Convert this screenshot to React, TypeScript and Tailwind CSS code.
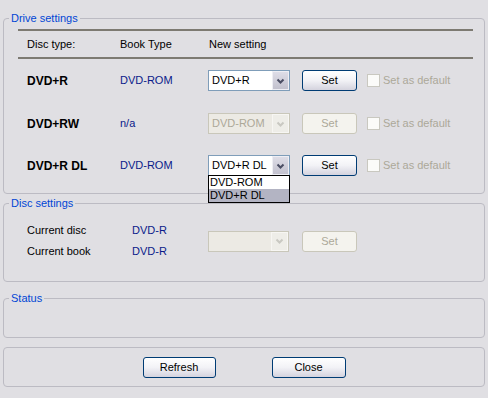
import React from 'react';

const Chevron: React.FC<{ disabled?: boolean }> = ({ disabled }) => (
  <svg width="9" height="6" viewBox="0 0 9 6">
    <path d="M1.5 1.5 L4.5 4.5 L7.5 1.5" stroke={disabled ? '#c9c8c2' : '#4a4d63'} strokeWidth="2" fill="none" />
  </svg>
);

const Combo: React.FC<{ value: string; disabled?: boolean; width?: string }> = ({ value, disabled, width = 'w-[82px]' }) => (
  <div
    className={`${width} h-[21px] flex items-stretch border ${
      disabled ? 'border-[#c9c7ba] bg-[#eceae4]' : 'border-[#7f9db9] bg-white'
    }`}
  >
    <span className={`flex-1 pl-[3px] leading-[19px] ${disabled ? 'text-[#aca899]' : 'text-black'}`}>{value}</span>
    <span
      className={`w-[17px] flex items-center justify-center border ${
        disabled
          ? 'border-[#f7f6f3] bg-[#eeede8]'
          : 'border-[#eeeef4] bg-gradient-to-b from-[#dedde7] to-[#c2c1ce]'
      }`}
    >
      <Chevron disabled={disabled} />
    </span>
  </div>
);

const XpButton: React.FC<{ label: string; disabled?: boolean; width?: string }> = ({ label, disabled, width = 'w-[55px]' }) => (
  <button
    className={`${width} h-[21px] rounded-[3px] border text-[11px] leading-[19px] ${
      disabled
        ? 'border-[#c9c7ba] bg-[#f4f3ee] text-[#aca899]'
        : 'border-[#003c74] bg-gradient-to-b from-white via-[#f2f2f6] to-[#d4d3de] text-black'
    }`}
  >
    {label}
  </button>
);

const GroupBox: React.FC<{ title?: string; className?: string; children?: React.ReactNode }> = ({ title, className = '', children }) => (
  <div className={`relative border border-[#bcbbc3] rounded-[4px] ${className}`}>
    {title && (
      <span className="absolute -top-[8px] left-[5px] px-[2px] bg-[#e0dfe3] text-[#0046d5] leading-[14px]">{title}</span>
    )}
    {children}
  </div>
);

const App: React.FC = () => {
  const drives = [
    { name: 'DVD+R', book: 'DVD-ROM', setting: 'DVD+R', enabled: true, mt: 'mt-[11px]' },
    { name: 'DVD+RW', book: 'n/a', setting: 'DVD-ROM', enabled: false, mt: 'mt-[22px]' },
    { name: 'DVD+R DL', book: 'DVD-ROM', setting: 'DVD+R DL', enabled: true, mt: 'mt-[21px]', open: true },
  ];

  return (
    <div
      className="w-[488px] h-[398px] bg-[#e0dfe3] pt-[18px] px-[3px] text-[11px] text-black"
      style={{ fontFamily: '"Liberation Sans", Arial, sans-serif' }}
    >
      <GroupBox title="Drive settings" className="h-[176px]">
        <div className="ml-[14px] mr-[11px] mt-[10px] h-[30px] border-t-2 border-b-2 border-[#7d7a72] flex items-center pl-[9px]">
          <span className="w-[93px]">Disc type:</span>
          <span className="w-[89px]">Book Type</span>
          <span>New setting</span>
        </div>

        {drives.map((d) => (
          <div key={d.name} className={`${d.mt} pl-[23px] h-[21px] flex items-center`}>
            <span className="w-[93px] text-[12px] font-bold">{d.name}</span>
            <span className="w-[88px] text-[#0a1a8a]">{d.book}</span>
            <div className="relative">
              <Combo value={d.setting} disabled={!d.enabled} />
              {d.open && (
                <div className="absolute top-[20px] left-0 w-[82px] border border-black bg-white z-10">
                  <div className="h-[13px] leading-[13px] pl-[1px]">DVD-ROM</div>
                  <div className="h-[13px] leading-[13px] pl-[1px] bg-[#b3b4c3]">DVD+R DL</div>
                </div>
              )}
            </div>
            <div className="ml-[12px]">
              <XpButton label="Set" disabled={!d.enabled} />
            </div>
            <span className="ml-[10px] w-[13px] h-[13px] border border-[#c9c8c0] bg-[#fbfbf9]" />
            <span className="ml-[3px] text-[#aca899]">Set as default</span>
          </div>
        ))}
      </GroupBox>

      <GroupBox title="Disc settings" className="mt-[9px] h-[79px]">
        <div className="mt-[16px] pl-[23px] flex items-center">
          <div className="flex flex-col">
            <div className="h-[21px] flex items-center">
              <span className="w-[105px]">Current disc</span>
              <span className="w-[76px] text-[#0a1a8a]">DVD-R</span>
            </div>
            <div className="h-[21px] flex items-center">
              <span className="w-[105px]">Current book</span>
              <span className="w-[76px] text-[#0a1a8a]">DVD-R</span>
            </div>
          </div>
          <Combo value="" disabled width="w-[81px]" />
          <div className="ml-[13px]">
            <XpButton label="Set" disabled />
          </div>
        </div>
      </GroupBox>

      <GroupBox title="Status" className="mt-[16px] h-[40px]" />

      <GroupBox className="mt-[9px] h-[40px]">
        <div className="pt-[9px] flex justify-center gap-[56px]">
          <XpButton label="Refresh" width="w-[73px]" />
          <XpButton label="Close" width="w-[74px]" />
        </div>
      </GroupBox>
    </div>
  );
};

export default App;
